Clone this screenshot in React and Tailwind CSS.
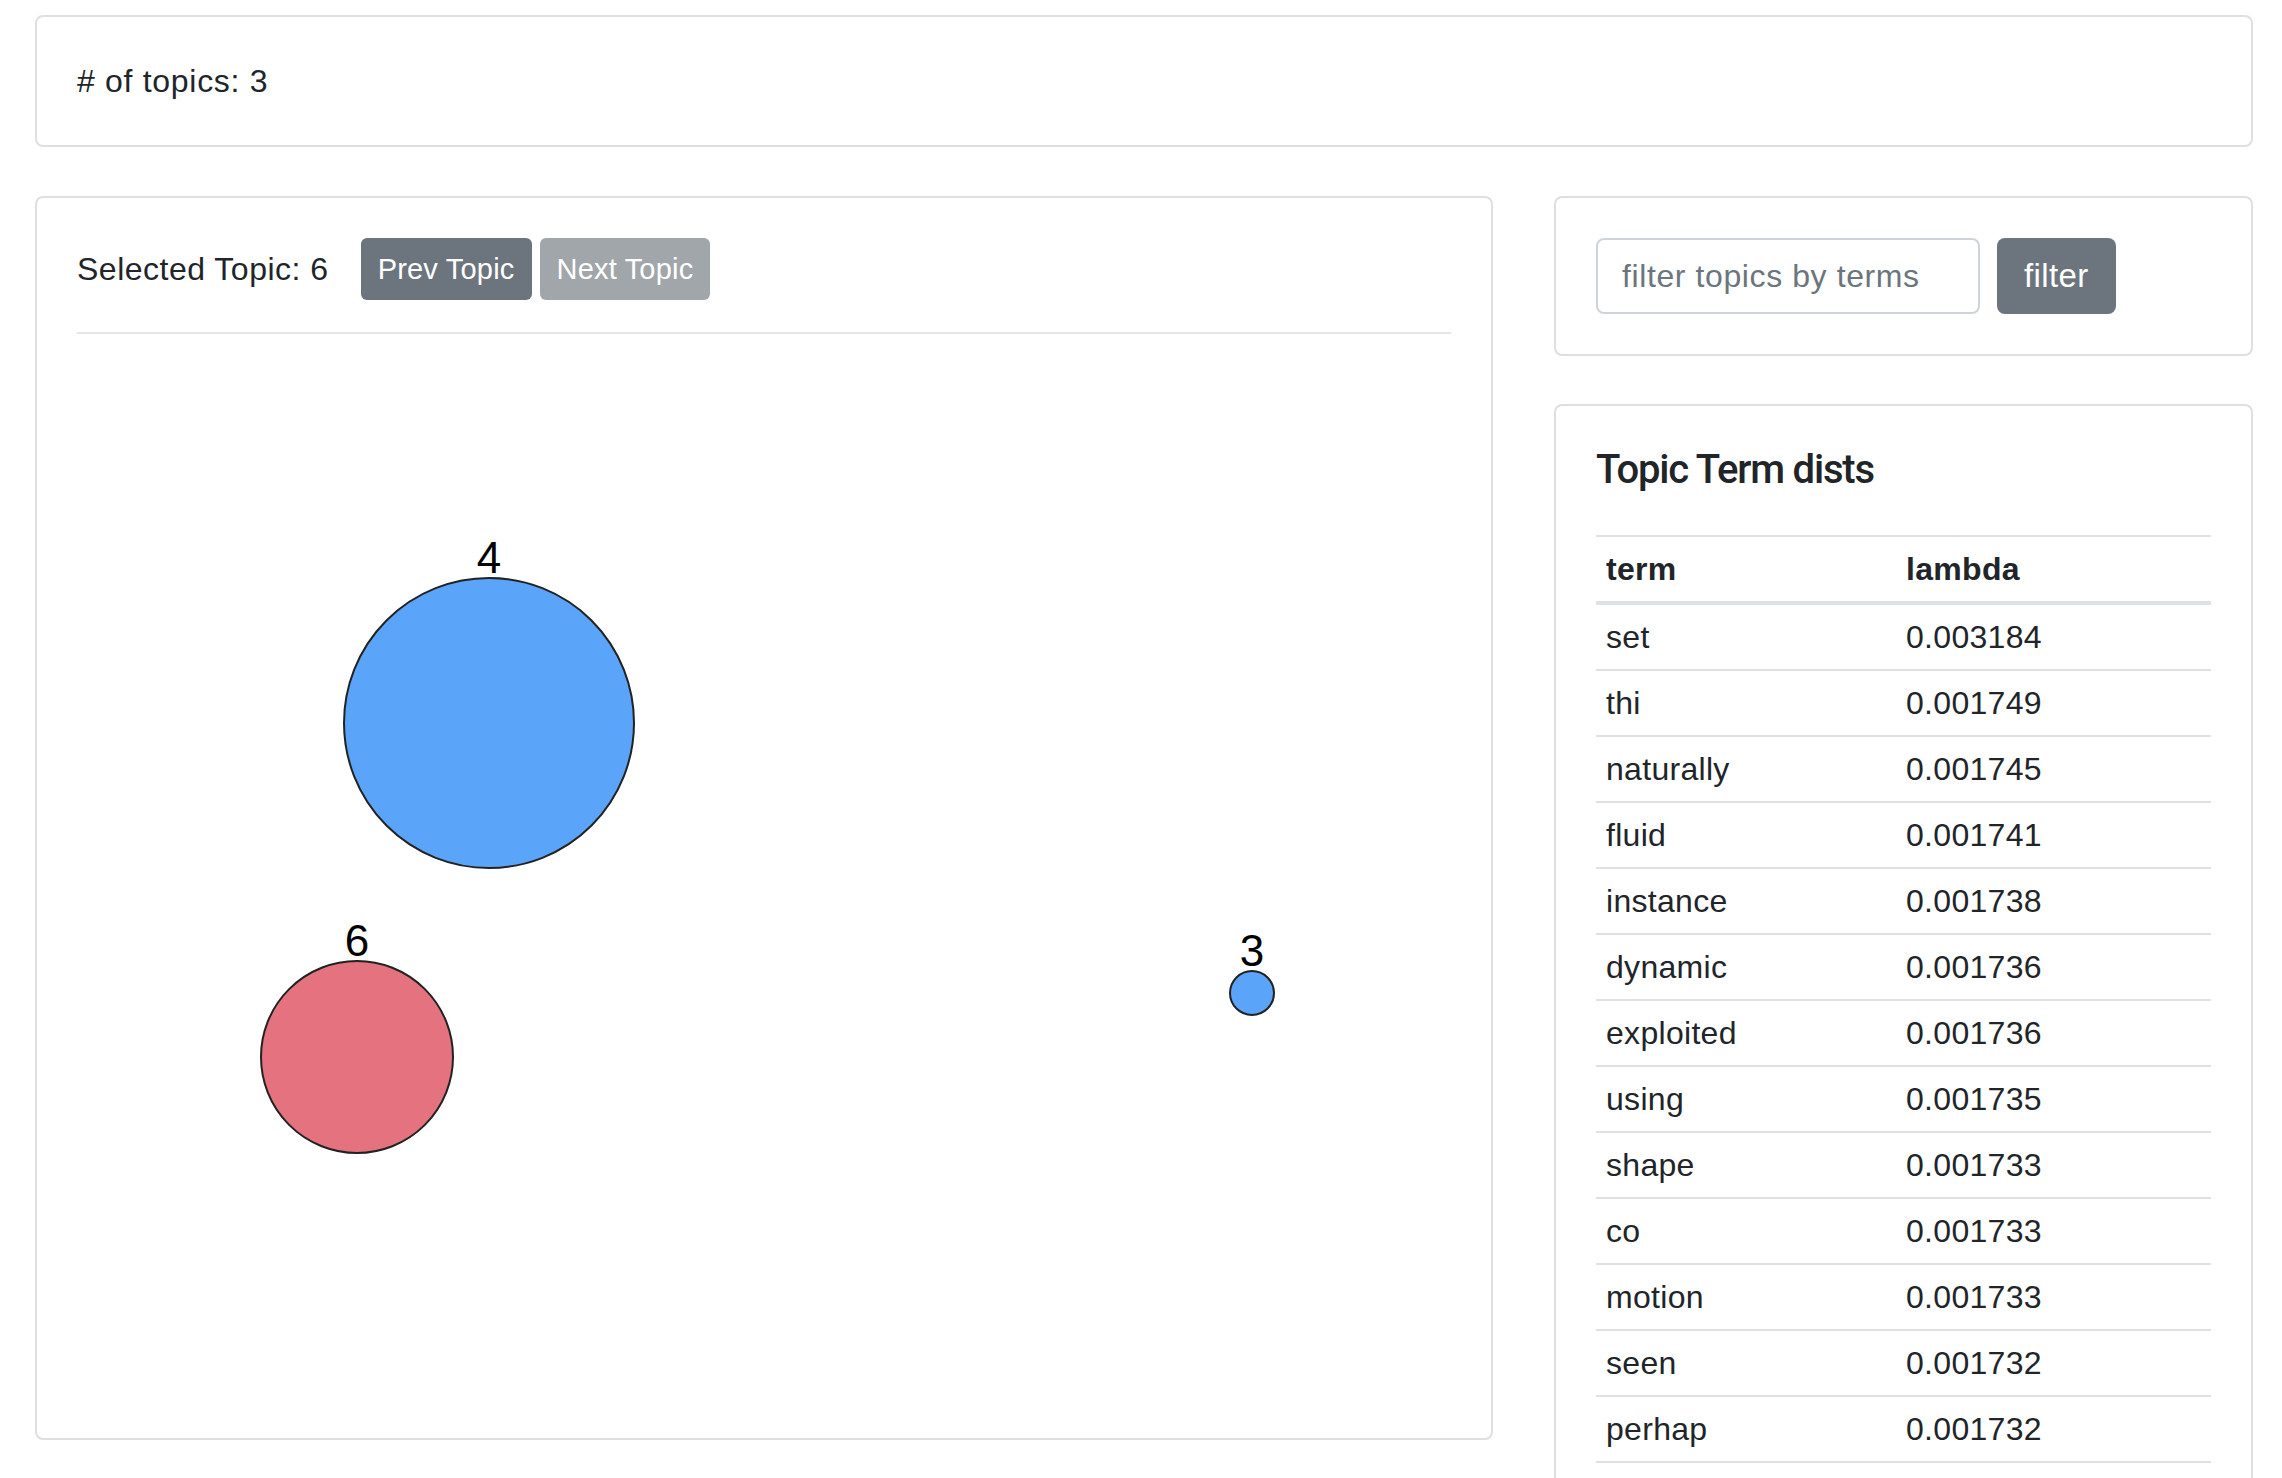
import React from "react";

const rows = [
  ["set", "0.003184"],
  ["thi", "0.001749"],
  ["naturally", "0.001745"],
  ["fluid", "0.001741"],
  ["instance", "0.001738"],
  ["dynamic", "0.001736"],
  ["exploited", "0.001736"],
  ["using", "0.001735"],
  ["shape", "0.001733"],
  ["co", "0.001733"],
  ["motion", "0.001733"],
  ["seen", "0.001732"],
  ["perhap", "0.001732"],
];

const circles = [
  { id: "4", cx: 412, cy: 357, r: 145, fill: "#5aa5fa" },
  { id: "6", cx: 280, cy: 691, r: 96, fill: "#e4727f" },
  { id: "3", cx: 1175, cy: 627, r: 22, fill: "#5aa5fa" },
];

export default function App() {
  return (
    <div className="min-h-screen bg-white pt-[15px] pl-[35px] pr-[29px] font-['Liberation_Sans',Arial,sans-serif] text-[#212529]">
      {/* top card */}
      <div className="rounded-[8px] border-2 border-[#dfdfdf] p-[40px]">
        <div className="text-[32px] leading-[48px] tracking-[0.7px]"># of topics: 3</div>
      </div>

      <div className="mt-[49px] flex items-start gap-[61px]">
        {/* left card */}
        <div className="w-[1458px] shrink-0 rounded-[8px] border-2 border-[#dfdfdf] p-[40px]">
          <div className="flex items-center">
            <span className="mr-[32px] text-[32px] leading-[48px] tracking-[0.5px]">Selected Topic: 6</span>
            <button className="h-[62px] rounded-[6px] bg-[#6c757d] px-[17px] text-[29px] leading-[42px] tracking-[0.2px] text-white">
              Prev Topic
            </button>
            <button className="ml-[8px] h-[62px] rounded-[6px] bg-[#a1a6ab] px-[17px] text-[29px] leading-[42px] tracking-[0.2px] text-white">
              Next Topic
            </button>
          </div>
          <div className="mt-[32px] h-[2px] bg-[#e6e6e6]" />
          <svg className="mt-[32px] block" width="1375" height="1032" viewBox="0 0 1375 1032">
            {circles.map((c) => (
              <g key={c.id}>
                <circle cx={c.cx} cy={c.cy} r={c.r} fill={c.fill} stroke="#222" strokeWidth="2" />
                <text
                  x={c.cx}
                  y={c.cy - c.r - 5}
                  textAnchor="middle"
                  fontSize="44"
                  fontFamily="'Liberation Sans', Arial, sans-serif"
                  fill="#000"
                >
                  {c.id}
                </text>
              </g>
            ))}
          </svg>
        </div>

        {/* right column */}
        <div className="flex w-[699px] shrink-0 flex-col gap-[48px]">
          <div className="rounded-[8px] border-2 border-[#dfdfdf] p-[40px]">
            <div className="flex items-center gap-[17px]">
              <input
                className="h-[76px] w-[384px] rounded-[8px] border-2 border-[#ced4da] px-[24px] text-[32px] leading-[48px] tracking-[0.6px] text-[#495057] outline-none placeholder:text-[#6c757d]"
                placeholder="filter topics by terms"
              />
              <button className="h-[76px] rounded-[8px] bg-[#6c757d] px-[27px] text-[33px] leading-[48px] tracking-[0.4px] text-white">
                filter
              </button>
            </div>
          </div>

          <div className="rounded-[8px] border-2 border-[#dfdfdf] p-[40px]">
            <h5 className="font-['Roboto',Arial,sans-serif] text-[40px] font-medium leading-[48px] tracking-[-1.2px]">
              Topic Term dists
            </h5>
            <div className="mt-[41px] border-t-2 border-[#dee2e6] text-[32px] leading-[48px] tracking-[0.3px]">
              <div className="grid grid-cols-[300px_1fr] border-b-4 border-[#dee2e6] py-[8px] font-bold">
                <div className="px-[10px]">term</div>
                <div className="px-[10px]">lambda</div>
              </div>
              {rows.map(([t, v]) => (
                <div key={t} className="grid grid-cols-[300px_1fr] border-b-2 border-[#dee2e6] py-[8px]">
                  <div className="px-[10px]">{t}</div>
                  <div className="px-[10px]">{v}</div>
                </div>
              ))}
            </div>
          </div>
        </div>
      </div>
    </div>
  );
}
